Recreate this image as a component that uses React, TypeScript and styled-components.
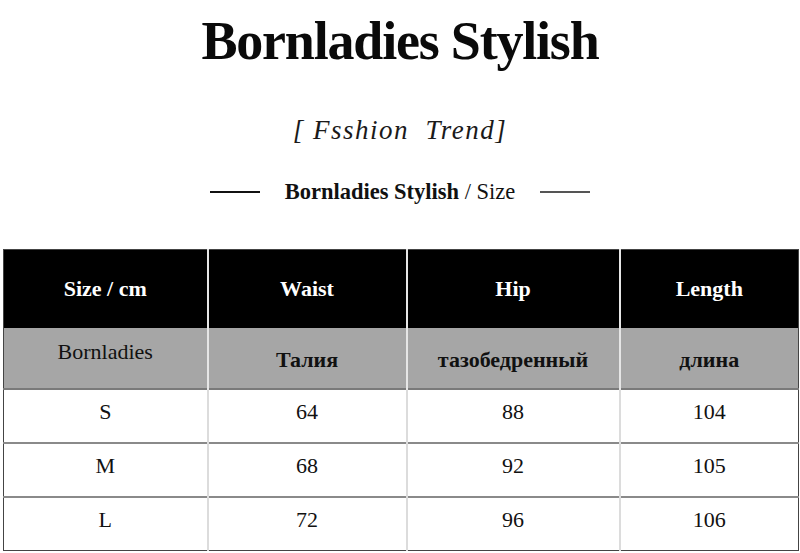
import React from 'react';
import styled, { createGlobalStyle } from 'styled-components';

type Row = {
  size: string;
  waist: number;
  hip: number;
  length: number;
};

const rows: Row[] = [
  { size: 'S', waist: 64, hip: 88, length: 104 },
  { size: 'M', waist: 68, hip: 92, length: 105 },
  { size: 'L', waist: 72, hip: 96, length: 106 },
];

const GlobalStyle = createGlobalStyle`
  html,
  body {
    margin: 0;
    padding: 0;
    background: #fff;
  }

  body {
    font-family: 'Liberation Serif', 'Times New Roman', serif;
    color: #111;
  }
`;

function App() {
  return (
    <Page>
      <GlobalStyle />
      <Title>Bornladies Stylish</Title>
      <Tagline>[ Fsshion&nbsp;&nbsp;Trend]</Tagline>
      <Subtitle>
        <Rule />
        <SubtitleText>
          <strong>Bornladies Stylish</strong> / Size
        </SubtitleText>
        <Rule $light />
      </Subtitle>
      <Table>
        <colgroup>
          <col style={{ width: 204 }} />
          <col style={{ width: 199 }} />
          <col style={{ width: 213 }} />
          <col />
        </colgroup>
        <thead>
          <HeadRow>
            <HeadCell>Size / cm</HeadCell>
            <HeadCell>Waist</HeadCell>
            <HeadCell>Hip</HeadCell>
            <HeadCell>Length</HeadCell>
          </HeadRow>
          <NameRow>
            <NameCell $raised>Bornladies</NameCell>
            <NameCell $bold>Талия</NameCell>
            <NameCell $bold>тазобедренный</NameCell>
            <NameCell $bold>длина</NameCell>
          </NameRow>
        </thead>
        <tbody>
          {rows.map((row) => (
            <DataRow key={row.size}>
              <DataCell>{row.size}</DataCell>
              <DataCell>{row.waist}</DataCell>
              <DataCell>{row.hip}</DataCell>
              <DataCell>{row.length}</DataCell>
            </DataRow>
          ))}
        </tbody>
      </Table>
    </Page>
  );
}

const Page = styled.div`
  display: flex;
  flex-direction: column;
  align-items: center;
  width: 800px;
  height: 553px;
  overflow: hidden;
`;

const Title = styled.h1`
  margin: 14px 0 0;
  font-family: 'Liberation Serif', serif;
  font-size: 54px;
  line-height: 54px;
  font-weight: 700;
  letter-spacing: -1.2px;
  color: #0a0a0a;
`;

const Tagline = styled.div`
  margin-top: 47px;
  font-family: 'Liberation Serif', serif;
  font-style: italic;
  font-size: 27px;
  line-height: 30px;
  letter-spacing: 1.5px;
  color: #1a1a1a;
`;

const Subtitle = styled.div`
  display: flex;
  align-items: center;
  gap: 25px;
  margin-top: 34px;
`;

const Rule = styled.span<{ $light?: boolean }>`
  display: block;
  width: 50px;
  height: 2px;
  background: ${({ $light }) => ($light ? '#555' : '#111')};
`;

const SubtitleText = styled.div`
  font-size: 22.5px;
  line-height: 26px;
  color: #111;

  strong {
    font-weight: 700;
  }
`;

const Table = styled.table`
  width: 796px;
  margin: 44px 0 0 3px;
  align-self: flex-start;
  border-collapse: collapse;
  table-layout: fixed;
  border: 1px solid #444;
  font-family: 'Liberation Serif', serif;
  font-size: 22px;
`;

const HeadRow = styled.tr`
  height: 78px;
  background: #000;
`;

const HeadCell = styled.th`
  padding: 0;
  text-align: center;
  vertical-align: middle;
  font-weight: 700;
  color: #fff;

  & + & {
    border-left: 2px solid #e6e6e6;
  }
`;

const NameRow = styled.tr`
  height: 61px;
  background: #a6a6a6;
  border-bottom: 2px solid #7a7a7a;
`;

const NameCell = styled.td<{ $bold?: boolean; $raised?: boolean }>`
  padding: ${({ $raised }) => ($raised ? '0 0 12px' : '4px 0 0')};
  text-align: center;
  vertical-align: middle;
  font-weight: ${({ $bold }) => ($bold ? 700 : 400)};
  color: #111;

  & + & {
    border-left: 2px solid #e6e6e6;
  }
`;

const DataRow = styled.tr`
  height: 54px;
  background: #fff;

  & + & {
    border-top: 2px solid #8a8a8a;
  }
`;

const DataCell = styled.td`
  padding: 0 0 8px;
  text-align: center;
  vertical-align: middle;
  color: #111;

  & + & {
    border-left: 2px solid #dcdcdc;
  }
`;

export default App;
